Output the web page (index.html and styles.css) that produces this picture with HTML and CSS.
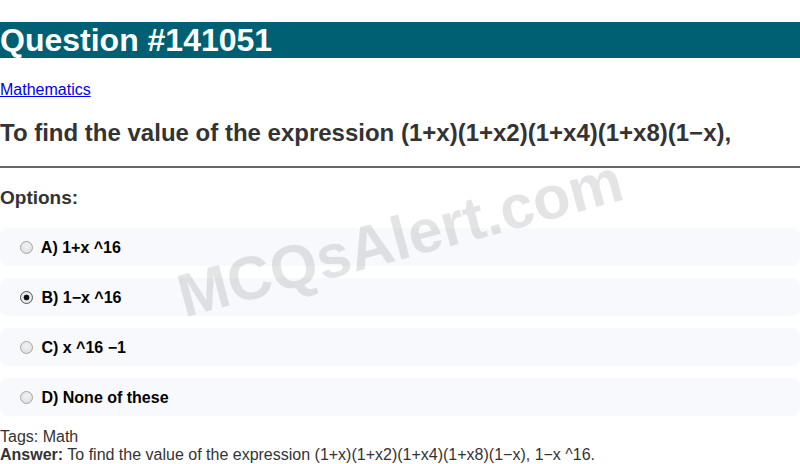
FILE: index.html
```html
<!DOCTYPE html>
<html>
<head>
<meta charset="utf-8">
<link rel="stylesheet" href="styles.css">
</head>
<body>
<div class="page">
  <h1 class="title">Question #141051</h1>
  <p class="cat"><a href="#">Mathematics</a></p>
  <h2 class="question">To find the value of the expression (1+x)(1+x2)(1+x4)(1+x8)(1−x),</h2>
  <hr class="rule">
  <h3 class="opts-title">Options:</h3>
  <div class="options">
    <label class="option"><input type="radio" name="o" disabled> A) 1+x ^16</label>
    <label class="option"><input type="radio" name="o" checked disabled> B) 1−x ^16</label>
    <label class="option"><input type="radio" name="o" disabled> C) x ^16 −1</label>
    <label class="option"><input type="radio" name="o" disabled> D) None of these</label>
  </div>
  <div class="tags">Tags: Math</div>
  <div class="answer"><b>Answer:</b> To find the value of the expression (1+x)(1+x2)(1+x4)(1+x8)(1−x), 1−x ^16.</div>
  <div class="watermark">MCQsAlert.com</div>
</div>
</body>
</html>
```
FILE: styles.css
```css
html, body {
  margin: 0;
  padding: 0;
  background: #fff;
}
body {
  font-family: "Liberation Sans", Arial, sans-serif;
  color: #333;
}
.page {
  position: relative;
  width: 800px;
  height: 464px;
  overflow: hidden;
}
.title {
  margin: 22px 0 23px;
  background: #006073;
  color: #fff;
  font-size: 32px;
  line-height: 36px;
  font-weight: bold;
}
.cat {
  margin: 0;
  font-size: 16px;
  line-height: 18px;
}
.cat a {
  color: #0000ee;
}
.question {
  margin: 19px 0 18px;
  font-size: 24px;
  line-height: 30px;
  font-weight: bold;
  color: #333;
}
.rule {
  margin: 0;
  border: 0;
  border-top: 2px solid #666;
  height: 0;
}
.opts-title {
  margin: 19px 0 19px;
  font-size: 19px;
  line-height: 22px;
  font-weight: bold;
  color: #333;
}
.options {
  display: flex;
  flex-direction: column;
  gap: 12px;
}
.option {
  box-sizing: border-box;
  display: flex;
  align-items: center;
  height: 38px;
  padding: 2px 0 0 15px;
  background: #f8f9fc;
  border-radius: 8px;
  font-size: 16px;
  font-weight: bold;
  color: #000;
  white-space: pre;
}
.option input {
  -webkit-appearance: none;
  appearance: none;
  box-sizing: border-box;
  margin: 0 4px 2px 5px;
  width: 13px;
  height: 13px;
  border-radius: 50%;
  border: 1px solid #a5a5a5;
  background: radial-gradient(circle at 50% 35%, #f2f2f2 0%, #dcdcdc 100%);
}
.option input:checked {
  border-color: #555;
  background: radial-gradient(circle, #111 0 2.6px, #e8e8e8 3.2px);
}
.tags {
  margin-top: 12px;
  font-size: 16px;
  line-height: 18px;
}
.answer {
  font-size: 16px;
  line-height: 18px;
}
.answer b {
  color: #333;
}
.watermark {
  position: absolute;
  left: 400px;
  top: 238px;
  transform: translate(-50%, -50%) rotate(-15deg);
  font-size: 61px;
  font-weight: bold;
  color: rgba(120, 120, 130, 0.2);
  white-space: nowrap;
  pointer-events: none;
}
```
